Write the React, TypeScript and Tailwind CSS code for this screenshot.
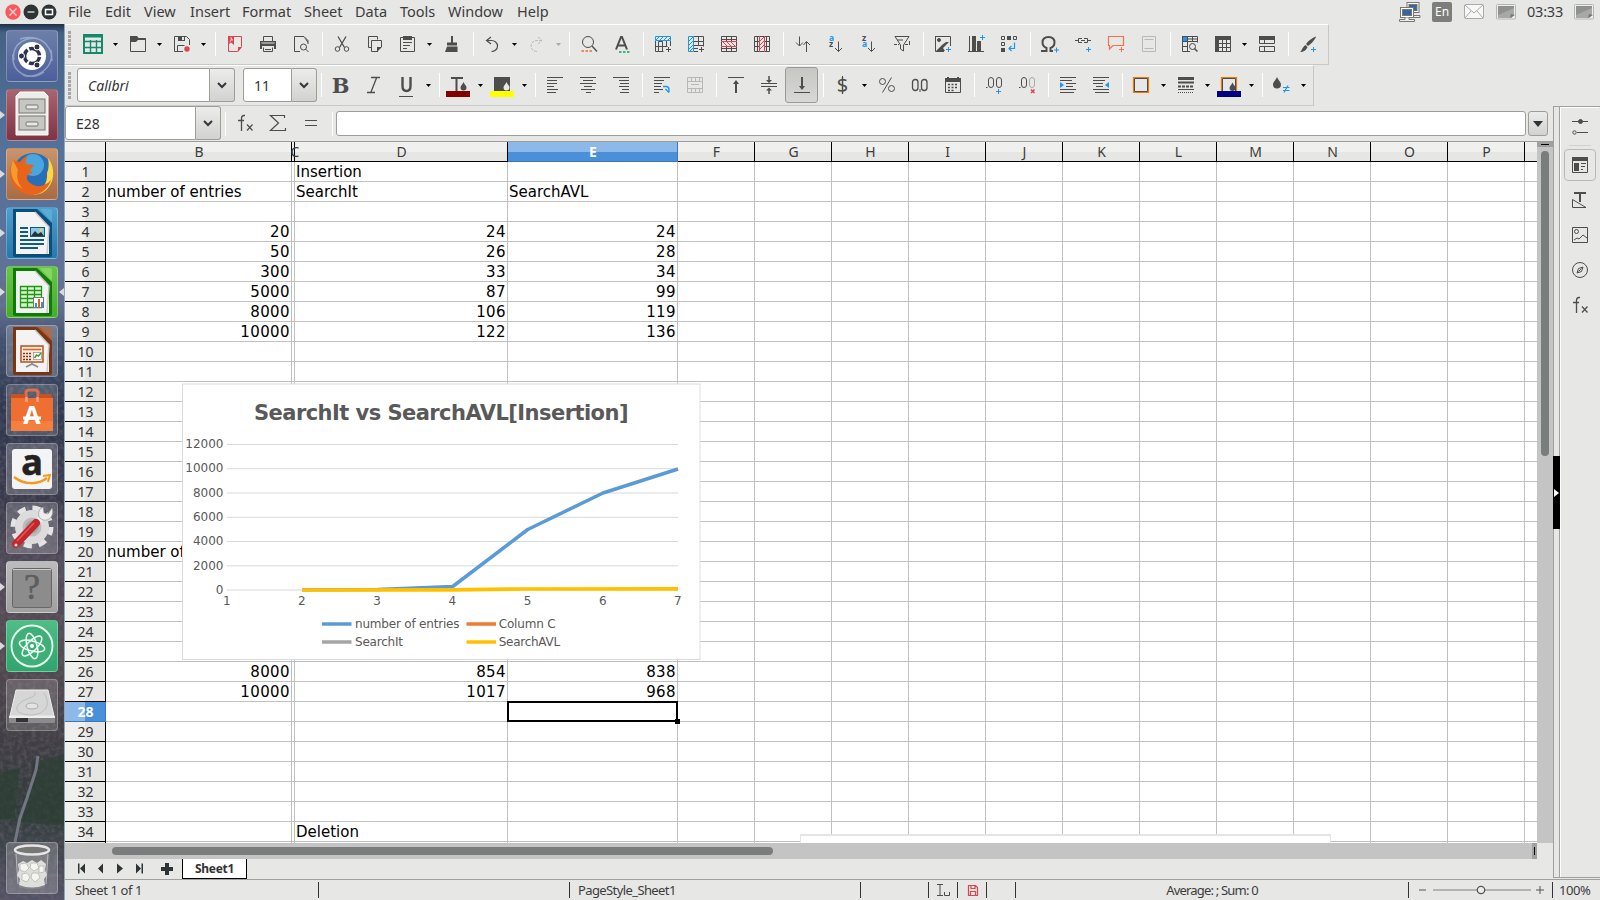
import type { ReactNode } from "react";

const G = "#4d4d4d";
const BLUE = "#1e96f0";
const RED = "#da4453";

function Svg({ children, w = 16, h = 16, className = "" }: { children: ReactNode; w?: number; h?: number; className?: string }) {
  return (
    <svg width={w} height={h} viewBox={`0 0 ${w} ${h}`} fill="none" stroke={G} className={`shrink-0 overflow-visible ${className}`}>
      {children}
    </svg>
  );
}

const plus = (x: number, y: number, c = BLUE) => <path d={`M${x - 2.5} ${y + 0}h5M${x} ${y - 2.5}v5`} stroke={c} />;
const drop = (x: number, y: number, c: string) => (
  <path d={`M${x} ${y}C${x + 1} ${y + 2.5} ${x + 3} ${y + 3.5} ${x + 3} ${y + 5.5}a3 3 0 0 1-6 0C${x - 3} ${y + 3.5} ${x - 1} ${y + 2.5} ${x} ${y}z`} fill={c} stroke="none" />
);

const icons: Record<string, ReactNode> = {
  new: (
    <g stroke="#15896b">
      <path d="M-2-1h18v18H-2z" strokeWidth="2" />
      <path d="M-3 .500h20" strokeWidth="2" /><path d="M-2 5.500h18M-2 11.500h18M4.500 4v14M10.500 4v14" strokeWidth="1.400" />
    </g>
  ),
  open: <><path d="M.5 15.5V.5h6l2 2h7v13z" /><path d="M0 0h7l2 2.500h7V4H8L6 6H0z" fill={G} stroke="none" /></>,
  save: <><path d="M9 15.500H.500V.500h12l3 3V9M3.500 15v-5.500h7" /><path d="M4 0h7v5H4zM8 1h2v3H8z" fill={G} fillRule="evenodd" stroke="none" /><circle cx="13" cy="13" r="2.700" fill={RED} stroke="none" /></>,
  pdf: <g><path d="M5 .500h9.500v10l-4 5H1.500V8" stroke={RED} /><path d="M15 11h-4v5zM1 0h6v9L4 6.500 1 9z" fill={RED} stroke="none" /><path d="M2.500 6c2-1 2-3 1.500-4.500.5 1 1 2.500 2 3" stroke="#fff" strokeWidth=".8" /></g>,
  print: <><path d="M3.500 5V.500h9V5M3.500 11.500v4h9v-4M5 13.500h6" /><path d="M0 5h16v8h-2v-3H2v3H0zm1.500 1.500v1h13v-1z" fill={G} fillRule="evenodd" stroke="none" /></>,
  preview: <><path d="M7 15.500H1.500V.500H11l4 4V8" /><path d="M10 0l5 5v2z" fill={G} stroke="none" /><circle cx="10.500" cy="11" r="3" /><path d="M12.500 13l3 3" /></>,
  cut: <><path d="M4 .500l6.500 11M12 .500L5.500 11.500" strokeWidth="1.300" /><circle cx="3.500" cy="13" r="2.300" /><circle cx="12.500" cy="13" r="2.300" /></>,
  copy: <><path d="M4.500 11.500H1.500V.500h9v3" /><path d="M14.500 11V4.500h-10v11H11" /><path d="M15 11l-5 5v-5z" fill={G} stroke="none" /></>,
  paste: <><path d="M.500 1.500h14v14H.500zM3 6.500h9M3 9.500h7M3 12.500h4" /><path d="M3 0h9v4H3z" fill={G} stroke="none" /></>,
  clone: <path d="M7 0h2v6.500h4v3H3v-3h4zM3 10.500h10.500V16H1z" fill={G} stroke="none" />,
  undo: <path d="M6 1L1.500 4.500 6 8M1.500 4.500h5c3 0 6 2 6 5.500s-3 5.500-6 5.500" strokeWidth="1.200" />,
  redo: <path d="M9 1l4 3.500L9 8M13 4.500H8C5 4.500 2 6.500 2 10s3 5.500 6 5.500" stroke="#bbb" strokeDasharray="3 1" />,
  find: <><circle cx="7" cy="6" r="5.500" /><path d="M11 10l5 5.500" strokeWidth="1.300" /><path d="M.500 15h11" stroke="#f0856a" strokeWidth="2" strokeDasharray="2.500 1.500" /></>,
  spell: <><path d="M2 13.500L7 1h1l5 12.500M4 9.500h7" strokeWidth="2" /><path d="M5 16h11" stroke="#3cb878" strokeWidth="2" strokeDasharray="2.500 1.500" /></>,
  insRow: <><path d="M.500 5v10.500h3V5.500h4v10M.500 10.500h12M11.500 5v5M15.500 5v5M3.500 15.500h5" /><path d="M.500.500h15v4H.500zM1 4l4-4M5 4l4-4M9 4l4-4M13 4l2-2" stroke={BLUE} />{plus(13.500, 13.500, G)}</>,
  insCol: <><path d="M6 .500h9.500v10M6 5.500h9M6 9.500h9M10.500.500v9M6 12.500h4M6 15.500h4" /><path d="M.500.500h5v15h-5zM1 5l4-4M1 9l4-4M1 13l4-4M2 15l3-3" stroke={BLUE} />{plus(13.500, 13.500, G)}</>,
  delRow: <><path d="M.500.500h15v15H.500zM5.500 0v5M10.500 0v5M5.500 11v5M10.500 11v5M0 3.500h16M0 12.500h16" /><path d="M0 5.500h16M0 10.500h16M2 6l4 4M6 6l4 4M10 6l4 4" stroke={RED} /></>,
  delCol: <><path d="M.500.500h15v15H.500zM0 5.500h5M0 10.500h5M11 5.500h5M11 10.500h5M3.500 0v16M12.500 0v16" /><path d="M5.500 0v16M10.500 0v16M6 5l4-4M6 9l4-4M6 13l4-4" stroke={RED} /></>,
  sort: <path d="M4.500.500v9M1 6.500l3.500 3.500L8 6.500M11.500 5.500V16M8.500 9l3-3.500 3.500 3.500" />,
  az: <><text x="1" y="5" fontSize="8.500" fontWeight="700" fill={BLUE} stroke="none">a</text><text x="1" y="11" fontSize="8.500" fontWeight="700" fill={G} stroke="none">z</text><path d="M10.500 5.500v10M7 12l3.500 3.500L14 12" /></>,
  za: <><text x="1" y="5" fontSize="8.500" fontWeight="700" fill={G} stroke="none">z</text><text x="1" y="11" fontSize="8.500" fontWeight="700" fill={BLUE} stroke="none">a</text><path d="M10.500 5.500v10M7 12l3.500 3.500L14 12" /></>,
  filter: <><path d="M1 .500h14L9.500 9v6L6.500 13V9zM3 4h6" /><path d="M0 8.500h5M11 8.500h5" strokeDasharray="3 1" /><path d="M15.500 5v4" /></>,
  image: <><path d="M.500.500h15V10M9 15.500H.500V0" /><circle cx="4" cy="4" r="1.500" fill={G} /><path d="M1 15l6-6 4-3h3l-6 6 2 3z" fill={G} stroke="none" />{plus(13.500, 13.500)}</>,
  chart: <><path d="M0 15.500h16M1.500 0v16" /><path d="M4 0h4v15H4zM9 5h4v10H9z" fill={G} stroke="none" />{plus(14.500, 1.500)}</>,
  pivot: <><path d="M.500.500h3v3h-3zM12.500.500h3v3h-3zM.500 6.500h3v3h-3z" /><path d="M6 0h4v4H6zM0 12h4v4H0z" fill={G} stroke="none" /><path d="M13.500 6.500v6h-5M10.500 10L8 12.500l2.500 2.500" stroke={BLUE} strokeWidth="1.200" /></>,
  omega: <><path d="M-1 15h5.500v-3C1 10.500.500 8 .500 6.500.500 3 3 1 6.500 1s6 2 6 5.500c0 2-1 4.500-4 5.500v3H11" strokeWidth="2" />{plus(14.500, 14)}</>,
  link: <><path d="M0 4.500h3M6 4.500h4M13 4.500h3M7 2.500H3.500v4H7M9 2.500h3.500v4H9" />{plus(13.500, 13.500)}</>,
  comment: <><path d="M.500.500h15v9H5L1.500 13V9.500h-1z" stroke="#f4724c" strokeWidth="1.200" />{plus(13.500, 13.500, "#f4724c")}</>,
  header: <path d="M1.500.500h13v15h-13zM3.500 3.500h9M3.500 12.500h9" stroke="#b8b8b8" />,
  freeze: <><path d="M.500.500h15v6M.500 0v15.500H8M0 5.500h16M0 10.500h6M5.500 0v16M10.500 0v6M5.500 3h10" /><path d="M1 1h4v4H1z" fill={BLUE} stroke="none" /><circle cx="10.500" cy="10.500" r="3" /><path d="M12.500 12.500l3 3" strokeWidth="1.500" /></>,
  table: <path d="M0 0h16v16H0zM4 4v3h3V4zM8 4v3h3V4zM12 4v3h3V4zM4 8v3h3V8zM8 8v3h3V8zM12 8v3h3V8zM4 12v3h3v-3zM8 12v3h3v-3zM12 12v3h3v-3z" fill={G} fillRule="evenodd" stroke="none" />,
  split: <><path d="M.500.500h15v7H.500zM.500 10.500h15v5H.500zM5.500 4v4M5.500 10v6" /><path d="M0 0h16v4H0z" fill={G} stroke="none" /></>,
  draw: <><path d="M15.500.500C12 2 8 5 6 8l2 2c3-2 6-5 8-9z" fill={G} stroke="none" /><path d="M5.500 9l2 2c-1 3-4 5-7.500 5 2-1 1.500-4 5.500-7z" fill={G} stroke="none" />{plus(13.500, 13.500)}</>,
  bold: <text x="7.500" y="15.500" textAnchor="middle" fontFamily="DejaVu Serif" fontWeight="700" fontSize="21" fill={G} stroke="none">B</text>,
  italic: <path d="M5 .500h9M1 15.500h8M10.500 1L5 15" strokeWidth="1.300" />,
  underline: <><path d="M3.500 0v9c0 4 1.500 5 4 5s4-1 4-5V0" strokeWidth="2.400" /><path d="M0 19.500h14" /></>,
  fontColor: <><path d="M0 1h12M5.500 1v13" strokeWidth="2" />{drop(12.500, 5, G)}<path d="M-5 14h24v6H-5z" fill="#820000" stroke="none" /></>,
  fill: <><path d="M-1 0h16v14H-1z" fill={G} stroke="none" />{drop(11.500, 5, "#e7e7e5")}<path d="M-5 14h24v6H-5z" fill="#ffff00" stroke="none" /></>,
  left: <path d="M0 .500h16M0 3.500h10M0 6.500h10M0 9.500h7M0 12.500h11M0 15.500h9" strokeWidth="1.100" />,
  center: <path d="M0 .500h16M3 3.500h10M0 6.500h16M4 9.500h8M1 12.500h14M6 15.500h5" strokeWidth="1.100" />,
  right: <path d="M0 .500h16M6 3.500h10M7 6.500h9M6 9.500h10M9 12.500h7M7 15.500h9" strokeWidth="1.100" />,
  wrap: <><path d="M0 .500h16M0 3.500h10M0 6.500h8M0 9.500h7M0 12.500h9M0 15.500h5" strokeWidth="1.100" /><path d="M9 9.500h3c2 0 3 1 3 3v3M11.500 12l3.500 3.500" stroke={BLUE} strokeWidth="1.300" /></>,
  merge: <path d="M.500.500h15v15H.500zM0 4.500h16M0 11.500h16M4.500 0v4M8.500 0v4M12.500 0v4M4.500 12v4M8.500 12v4M12.500 12v4M4 7.500h8" stroke="#b8b8b8" />,
  top: <><path d="M0 .500h16" /><path d="M8 16V4" strokeWidth="2" /><path d="M8 3l3 4H5z" fill={G} stroke="none" /></>,
  middle: <><path d="M0 6.500h16M0 9.500h16" /><path d="M8-1v5M8 17v-5" strokeWidth="1.500" /><path d="M8 6l3-3H5zM8 10.500l3 3H5z" fill={G} stroke="none" /></>,
  bottom: <><path d="M0 15.500h16" /><path d="M8 0v10" strokeWidth="2" /><path d="M8 13l3-4H5z" fill={G} stroke="none" /></>,
  dollar: <><text x="7.500" y="15" textAnchor="middle" fontSize="20" fill={G} stroke="none">$</text><path d="M7.500-1v18" /></>,
  percent: <><circle cx="3.500" cy="4.500" r="3" /><circle cx="12.500" cy="11.500" r="3" /><path d="M12.500.500L3.500 15.500" /></>,
  number: <><rect x=".500" y="2.500" width="5.500" height="11" rx="2.700" strokeWidth="1.300" /><rect x="9.500" y="2.500" width="5.500" height="11" rx="2.700" strokeWidth="1.300" /><path d="M8 12v3" /></>,
  date: <><path d="M.500 2.500h15v13H.500z" /><path d="M0 1h2V0h2v1h8V0h2v1h2v4H0z" fill={G} stroke="none" /><path d="M3 7.500h10M3 10.500h10M3 13.500h7" strokeWidth="1.500" strokeDasharray="2 1.500" /></>,
  addDec: <><rect x="2.500" y=".500" width="5" height="10" rx="2.500" /><rect x="10.500" y=".500" width="5" height="10" rx="2.500" /><path d="M0 10.500h1.500" />{plus(12.500, 14.500)}</>,
  delDec: <><rect x="2.500" y=".500" width="5" height="10" rx="2.500" /><rect x="10.500" y=".500" width="5" height="10" rx="2.500" stroke="#aaa" /><path d="M0 10.500h1.500" /><path d="M12 12.500l3.500 3.500M15.500 12.500L12 16" stroke={RED} strokeWidth="1.500" /></>,
  indent: <><path d="M0 .500h16M0 3.500h12M6 6.500h10M6 9.500h7M0 12.500h16M0 15.500h14" /><path d="M0 5l4 3-4 3z" fill={BLUE} stroke="none" /></>,
  outdent: <><path d="M0 .500h16M0 3.500h12M0 6.500h10M3 9.500h7M0 12.500h16M2 15.500h14" /><path d="M16 5l-4 3 4 3z" fill={BLUE} stroke="none" /></>,
  border: <><path d="M-.500.500h15v15h-15z" stroke="#f67400" strokeWidth="1.200" /><path d="M.500 1.500h13v13H.500z" /></>,
  lines: <><path d="M0 1.500h16" strokeWidth="3" /><path d="M0 5.500h16" strokeWidth="2" /><path d="M0 9.500h16" strokeWidth="2" strokeDasharray="3 1" /><path d="M0 12.500h16" /><path d="M0 15.500h16" strokeDasharray="1 1" /></>,
  borderColor: <><path d="M-.500 14V.500h15V14" stroke="#f67400" strokeWidth="1.200" /><path d="M.500 14V1.500h13V14" />{drop(10.500, 5.500, G)}<path d="M-5 14h24v6H-5z" fill="#000080" stroke="none" /></>,
  cond: <><path d="M3 0c1 3 4 5 4 7.500a4 4 0 0 1-8 0C-1 5 2 3 3 0z" fill={G} stroke="none" /><path d="M9 10.500h6.500M9 13.500h6.500M14 8.500l-4 7" stroke={BLUE} strokeWidth="1.200" /></>,
};

function Icon({ n, active = false }: { n: string; active?: boolean }) {
  return (
    <div className={`flex h-[36px] w-[33px] shrink-0 items-center rounded-[3px] ${active ? "border border-[#9a9a98] bg-linear-to-b from-[#c6c6c3] to-[#d8d8d6] pl-[8px]" : "pl-[9px]"}`}>
      <Svg>{icons[n]}</Svg>
    </div>
  );
}
function Arrow({ pale = false }: { pale?: boolean }) {
  return (
    <div className="flex w-[11px] shrink-0 items-center justify-center">
      <svg width="5" height="3" viewBox="0 0 5 3"><path d="M0 0h5L2.500 3z" fill={pale ? "#aaa" : "#000"} /></svg>
    </div>
  );
}
const Sep = () => <div className="ml-[5px] mr-[2px] h-6 w-px shrink-0 self-center bg-white" />;

function Tools({ spec }: { spec: string }) {
  return (
    <>
      {spec.split(" ").map((t, i) =>
        t === "|" ? <Sep key={i} /> : t === "v" ? <Arrow key={i} /> : t === "u" ? <Arrow key={i} pale /> : <Icon key={i} n={t} active={t === "bottom"} />
      )}
    </>
  );
}

const Handle = () => (
  <div className="flex w-[3px] shrink-0 flex-col gap-px self-center">
    {Array.from({ length: 7 }, (_, i) => <div key={i} className="h-[3px] w-[3px] bg-[#a5a5a3]" />)}
  </div>
);

function Combo({ text, box, className = "" }: { text: string; box: string; className?: string }) {
  return (
    <div className="flex h-[34px] shrink-0 text-[14px] text-[#333]">
      <div className={`flex items-center rounded-l-[3px] border border-[#9d9d99] bg-white ${box} ${className}`}>{text}</div>
      <div className="flex w-[25px] items-center justify-center rounded-r-[3px] border border-l-0 border-[#9d9d99] bg-linear-to-b from-[#ececea] to-[#d2d2d0]">
        <svg width="10" height="7" viewBox="0 0 10 7" fill="none"><path d="M1 1l4 4 4-4" stroke="#30363a" strokeWidth="2" /></svg>
      </div>
    </div>
  );
}

/* ---------- Launcher ---------- */

function DocTile({ dark, light, children }: { dark: string; light: string; children: ReactNode }) {
  return (
    <>
      <path d="M7 2h27l12 13v33q0 2-2 2H9q-2 0-2-2z" fill={dark} />
      <path d="M31 2h13q2 0 2 2v12z" fill={light} opacity=".75" />
      <path d="M10 5h19l14 15v27H10z" fill="#f3f3f3" />
      <path d="M29 5l14 15-2 27" stroke="#c9c9c9" strokeWidth="1.500" />
      {children}
    </>
  );
}

const tiles: { bg: string; art: ReactNode; left?: boolean; right?: boolean }[] = [
  {
    bg: "bg-linear-to-b from-[#6d7fa8] to-[#4d5f9a]",
    art: (
      <>
        <g stroke="#c8d2ea" strokeWidth="1.500" opacity=".5"><path d="M8 30C4 10 30 2 40 14M45 20c4 20-18 30-28 25M14 9c18-5 32 4 32 22" /><path d="M38 42C25 52 5 44 7 24" /></g>
        <circle cx="26" cy="26" r="14" fill="#fff" />
        <circle cx="26" cy="26" r="7.500" stroke="#2c3250" strokeWidth="3.500" strokeDasharray="13.700 2" strokeDashoffset="-1" />
        <g fill="#2c3250" stroke="#fff" strokeWidth="1"><circle cx="15.500" cy="26" r="3" /><circle cx="31" cy="17" r="3" /><circle cx="31" cy="35" r="3" /></g>
      </>
    ),
  },
  {
    bg: "bg-linear-to-b from-[#a96572] to-[#7e3443]", left: true,
    art: (
      <>
        <path d="M10 7l4-4h24l4 4v39H10z" fill="#ececea" stroke="#fff" />
        <rect x="13" y="10" width="26" height="14" fill="#c6c7c1" stroke="#777" /><rect x="13" y="27" width="26" height="14" fill="#c6c7c1" stroke="#777" />
        <rect x="20" y="16" width="12" height="4" rx="1" fill="#e8e8e4" stroke="#777" /><rect x="20" y="33" width="12" height="4" rx="1" fill="#e8e8e4" stroke="#777" />
      </>
    ),
  },
  {
    bg: "bg-linear-to-b from-[#c9946c] to-[#a96b43]", left: true,
    art: (
      <>
        <circle cx="27" cy="25" r="20" fill="#2a6eb5" /><circle cx="27" cy="17" r="11" fill="#4ba6de" />
        <path d="M42 10c7 9 7 22 0 30-4 5-10 7-16 7 10-3 16-12 15-22 2-5 2-9 1-15z" fill="#fbd84a" />
        <path d="M7 12c-6 11-3 26 8 32 12 7 26 1 30-12-6 7-15 8-21 3-4-3-4-7-1-9l4-1-3-3c2-1 2-3 4-5-4-1-5 0-8-1-1-4 1-6 2-8-4 1-6 3-8 6l-4-1z" fill="#e8641b" />
        <path d="M7 12c-5 12 0 24 10 29-5-5-7-12-5-19z" fill="#f59a2d" />
      </>
    ),
  },
  {
    bg: "bg-linear-to-b from-[#4fa0cc] to-[#2678a8]", left: true,
    art: (
      <DocTile dark="#0b4d7d" light="#5eb3dd">
        <path d="M14 21h8M14 25h8M14 29h8M14 33h24M14 37h24M14 41h18" stroke="#0f5a8c" strokeWidth="2" />
        <rect x="24.500" y="20.500" width="14" height="9" fill="#8cc7ea" stroke="#0f5a8c" /><path d="M25 29l4-5 3 3 3-2 3 4z" fill="#26323a" />
        <circle cx="35" cy="23" r="1.500" fill="#f1d34b" />
      </DocTile>
    ),
  },
  {
    bg: "bg-linear-to-b from-[#6ac44c] to-[#43ad2b]", left: true, right: true,
    art: (
      <DocTile dark="#0f7a05" light="#8fdd6c">
        <path d="M14 20h22v21H14z" fill="#dff3d7" /><path d="M14.500 20.500h21v21h-21zM14 24.500h22M14 28.500h22M14 32.500h22M14 36.500h22M21.500 20v21M28.500 20v21" stroke="#1c9a0e" strokeWidth="1.300" />
        <rect x="27.500" y="31.500" width="10" height="10" fill="#fff" stroke="#777" /><path d="M29 37h2v4h-2z" fill="#3a8ed0" /><path d="M32 33h2v8h-2z" fill="#e0601b" /><path d="M35 36h2v5h-2z" fill="#3a8ed0" />
      </DocTile>
    ),
  },
  {
    bg: "bg-white/20",
    art: (
      <DocTile dark="#7d3410" light="#b8683c">
        <rect x="15" y="21" width="22" height="16" fill="#fbeadd" stroke="#b4521e" strokeWidth="1.500" />
        <path d="M17 24.500h18" stroke="#e0601b" strokeWidth="1.500" /><path d="M17 28.500h8M17 31.500h8M17 34.500h8" stroke="#7d3410" strokeWidth="1.700" strokeDasharray="2 1" />
        <rect x="27.500" y="27.500" width="8" height="7" fill="#fff" stroke="#999" strokeWidth=".8" /><path d="M28.500 33l2-3 2 1 2.500-3" stroke="#3f9f35" strokeWidth="1.500" /><path d="M26 37v2l-6 3M26 39l6 3" stroke="#888" strokeWidth="1.500" />
      </DocTile>
    ),
  },
  {
    bg: "bg-white/15",
    art: (
      <>
        <path d="M20 18V9q0-3 3-3h6q3 0 3 3v9" stroke="#e0704a" strokeWidth="3" /><path d="M5 10h14v5H5zM33 10h12l2 5H33z" fill="#c85220" /><path d="M5 14h42v33H5z" fill="#ee6f31" /><path d="M5 37h42v10H5z" fill="#f47f3f" /><path d="M20.500 13v5M31.500 13v5" stroke="#f0a080" strokeWidth="2.500" />
        <text x="26" y="40" textAnchor="middle" fontSize="25" fontWeight="700" fill="#fff">A</text><path d="M17 34h18" stroke="#fff" strokeWidth="3" />
      </>
    ),
  },
  {
    bg: "bg-white/20",
    art: (
      <>
        <rect x="6" y="6" width="40" height="40" rx="3" fill="#f4f4f4" />
        <text x="26" y="32" textAnchor="middle" fontSize="36" fontWeight="700" fill="#222" stroke="#222" strokeWidth=".6">a</text>
        <path d="M8 34c10 8 24 8 33 1" stroke="#f79a1c" strokeWidth="2.500" /><path d="M37 33l7-1-2 7" stroke="#f79a1c" strokeWidth="2" />
      </>
    ),
  },
  {
    bg: "bg-white/20",
    art: (
      <>
        <circle cx="26" cy="25" r="19" stroke="#e4e4e4" strokeWidth="5" strokeDasharray="8 6.900" /><circle cx="26" cy="25" r="17" fill="#dcdcdc" /><circle cx="26" cy="25" r="8" fill="#a4a4a4" stroke="#bbb" strokeWidth="3" />
        <path d="M31 20l8-8" stroke="#eee" strokeWidth="6" /><path d="M46 6c3 9-5 15-11 11-4-3-3-10 2-12l1 6 4 1z" fill="#ececec" stroke="#999" strokeWidth=".7" />
        <path d="M10 42l20-21" stroke="#c3272e" strokeWidth="8" strokeLinecap="round" /><path d="M11 39l17-18" stroke="#e5575b" strokeWidth="1.500" /><circle cx="10" cy="43" r="1.500" fill="#eee" />
      </>
    ),
  },
  {
    bg: "bg-linear-to-b from-[#bcbcbc] to-[#a0a0a0]", left: true,
    art: (
      <>
        <rect x="6.500" y="7.500" width="39" height="39" rx="2" fill="#8c8c8c" stroke="#666" /><path d="M7 8.500h38" stroke="#ccc" />
        <text x="26" y="38" textAnchor="middle" fontSize="36" className="font-['Liberation_Serif']" fill="#5d5d5d" stroke="#5d5d5d" strokeWidth=".6">?</text>
      </>
    ),
  },
  {
    bg: "bg-linear-to-b from-[#4ebd86] to-[#2fa56d]", left: true,
    art: (
      <>
        <circle cx="26" cy="26" r="20.500" fill="#3fae78" stroke="#eafff4" strokeWidth="1.800" />
        <g stroke="#eafff4" strokeWidth="1.500"><ellipse cx="26" cy="26" rx="13" ry="5" transform="rotate(15 26 26)" /><ellipse cx="26" cy="26" rx="13" ry="5" transform="rotate(75 26 26)" /><ellipse cx="26" cy="26" rx="13" ry="5" transform="rotate(135 26 26)" /></g>
        <circle cx="26" cy="26" r="2" fill="#fff" />
      </>
    ),
  },
  {
    bg: "bg-white/15",
    art: (
      <>
        <path d="M10 11h32l6 26H4z" fill="#d6d6d6" stroke="#efefef" /><path d="M3 37h46v6q0 1-1 1H4q-1 0-1-1z" fill="#8b8b8b" /><path d="M3 37h46v2H3z" fill="#eee" /><path d="M10 39h12v4H10z" fill="#333" />
        <ellipse cx="26" cy="27" rx="6" ry="3" fill="#e4e4e4" stroke="#aaa" /><path d="M38 14c9 14-2 22-13 22S6 31 14 24s16-4 15-11" stroke="#bdbdbd" />
      </>
    ),
  },
];

function Tile({ bg, left, right, children }: { bg: string; left?: boolean; right?: boolean; children: ReactNode }) {
  return (
    <div className="flex w-full shrink-0 items-center">
      <div className="w-[6px]">{left && <svg width="5" height="8" viewBox="0 0 5 8"><path d="M0 0l5 4-5 4z" fill="#dadada" /></svg>}</div>
      <div className={`h-[52px] w-[52px] rounded-[4px] border border-white/25 ${bg}`}>
        <svg width="52" height="52" viewBox="0 0 52 52" fill="none" className="-m-px">{children}</svg>
      </div>
      <div className="w-[6px]">{right && <svg width="5" height="8" viewBox="0 0 5 8" className="ml-px"><path d="M5 0L0 4l5 4z" fill="#dadada" /></svg>}</div>
    </div>
  );
}

function Launcher() {
  return (
    <aside className="relative flex w-[65px] shrink-0 flex-col justify-between overflow-hidden border-r border-[#92a6bb] pt-[6px] pb-[6px]">
      <svg className="absolute inset-0" width="64" height="876" viewBox="0 0 64 876">
        <defs>
          <linearGradient id="sky" x1="0" y1="0" x2="0" y2="1">
            <stop offset="0" stopColor="#1e3048" /><stop offset=".01" stopColor="#456285" /><stop offset=".12" stopColor="#51719a" /><stop offset=".32" stopColor="#647297" />
            <stop offset=".36" stopColor="#3f5372" /><stop offset=".44" stopColor="#30384f" /><stop offset=".55" stopColor="#393a4b" />
            <stop offset=".62" stopColor="#514a5a" /><stop offset=".72" stopColor="#544a50" /><stop offset=".82" stopColor="#403e44" /><stop offset=".9" stopColor="#303c3a" /><stop offset="1" stopColor="#545266" />
          </linearGradient>
          <filter id="rock"><feTurbulence type="fractalNoise" baseFrequency=".22" numOctaves="3" seed="4" /><feColorMatrix values="0 0 0 0 .15  0 0 0 0 .13  0 0 0 0 .16  1.600 0 0 0 -.6" /></filter>
        </defs>
        <rect width="64" height="876" fill="url(#sky)" />
        <path d="M0 310l20 8 44 2v556H0z" filter="url(#rock)" opacity=".7" />
        <path d="M64 730l-30 8-12 60 42 4zM0 748l20-4-6 50-14 2z" fill="#2c3f34" opacity=".7" />
        <path d="M38 732l-2 14-9 28-7 20-5 24" stroke="#747683" strokeWidth="3" fill="none" />
      </svg>
      <div className="relative flex flex-col gap-[7px]">
        {tiles.map((t, i) => <Tile key={i} bg={t.bg} left={t.left} right={t.right}>{t.art}</Tile>)}
      </div>
      <div className="relative">
        <Tile bg="bg-white/20">
          <path d="M10 8l3 37q13 5 26 0l3-37z" fill="#8e8e90" opacity=".55" />
          <path d="M12 22l5-3 4 2 5-3 5 3 4-3 5 4-1 6 2 5-3 4 1 6q-13 5-26 0l1-6-3-4 2-5z" fill="#dededa" />
          <g fill="#f4f4f0" stroke="#b9b9b3" strokeWidth=".8"><path d="M14 22l6-1 3 5-4 4-5-2zM25 21l6 0 2 5-5 3-4-3zM33 24l5 0 0 6-5 1zM16 32l5-1 3 4-3 5-5-2zM26 31l6 0 2 5-5 4-4-4z" /></g>
          <ellipse cx="26" cy="8" rx="17" ry="4.500" fill="#777" stroke="#e6e6e6" strokeWidth="2.500" />
          <path d="M10 12l2 30M42 12l-2 30" stroke="#d8d8d8" opacity=".7" />
        </Tile>
      </div>
    </aside>
  );
}

/* ---------- Sheet ---------- */

const cols: [string, string][] = [
  ["B", "w-[186px]"], ["C", "w-[3px]"], ["D", "w-[213px]"], ["E", "w-[170px]"],
  ..."FGHIJKLMNOP".split("").map((c) => [c, "w-[77px]"] as [string, string]),
];
const data: Record<string, string> = {
  D1: "Insertion", B2: "number of entries", D2: "SearchIt", E2: "SearchAVL",
  B4: "20", D4: "24", E4: "24", B5: "50", D5: "26", E5: "28", B6: "300", D6: "33", E6: "34",
  B7: "5000", D7: "87", E7: "99", B8: "8000", D8: "106", E8: "119", B9: "10000", D9: "122", E9: "136",
  B20: "number of entries", B26: "8000", D26: "854", E26: "838", B27: "10000", D27: "1017", E27: "968", D34: "Deletion",
};

function Chart() {
  const ys = [444.5, 468.700, 493, 517.300, 541.500, 565.800, 590];
  return (
    <svg className="absolute left-[117px] top-[241px] font-['DejaVu_Sans']" width="519" height="277" viewBox="182 383 519 277" fill="#595959" fontSize="12">
      <rect x="182.500" y="384" width="517.500" height="275.500" fill="#fff" stroke="#dcdcdc" />
      <text x="254" y="420" fontSize="21" fontWeight="700" textLength="374.500">SearchIt vs SearchAVL[Insertion]</text>
      {ys.map((y, i) => (
        <g key={i}>
          <path d={`M227 ${y}H678`} stroke="#d9d9d9" />
          <text x="223.500" y={y + 3.700} textAnchor="end">{12000 - i * 2000}</text>
          <text x={226.700 + i * 75.200} y="605" textAnchor="middle">{i + 1}</text>
        </g>
      ))}
      <path d="M302.500 589.800L377.500 589.400 452.700 586.500 527.700 529.500 603 493 678 469" fill="none" stroke="#5b9bd5" strokeWidth="3.500" strokeLinejoin="round" />
      <path d="M302 590L452.700 589.800 527.700 589 678 588.800" fill="none" stroke="#ffc000" strokeWidth="3.700" />
      <g strokeWidth="3.500"><path d="M322 624h29.500" stroke="#5b9bd5" /><path d="M466.500 624H496" stroke="#ed7d31" /><path d="M322 642h29.500" stroke="#a5a5a5" /><path d="M466.500 642H496" stroke="#ffc000" /></g>
      <text x="355" y="628" textLength="104.500">number of entries</text><text x="498.700" y="628" textLength="57">Column C</text>
      <text x="355" y="646" textLength="48">SearchIt</text><text x="498.700" y="646" textLength="61.500">SearchAVL</text>
    </svg>
  );
}

function Sheet() {
  return (
    <div className="relative h-[701px] w-[1472px] overflow-hidden bg-white">
      <div className="flex h-5 text-[14px] leading-[19px] text-[#3c3c3c]">
        <div className="w-[41px] shrink-0 border-r border-b border-black bg-linear-to-b from-[#f0f0ee] from-50% to-[#e6e6e4] to-50%" />
        {cols.map(([c, w]) => (
          <div key={c} className={`flex shrink-0 justify-center border-r border-b ${w} ${c === "E" ? "border-[#3578c0] bg-linear-to-b from-[#8db8e7] from-50% to-[#4a90d9] to-50% font-bold text-white" : "border-black bg-linear-to-b from-[#f0f0ee] from-50% to-[#e6e6e4] to-50%"}`}>
            <span className={`relative h-[19px] ${c === "C" ? "left-[2px]" : "pl-px"}`}>{c}</span>
          </div>
        ))}
        <div className="grow border-b border-black bg-linear-to-b from-[#f0f0ee] from-50% to-[#e6e6e4] to-50%" />
      </div>
      {Array.from({ length: 35 }, (_, i) => i + 1).map((r) => (
        <div key={r} className="flex h-5">
          <div className={`flex w-[41px] shrink-0 items-center justify-center border-r border-b pl-px text-[14px] leading-[19px] ${r === 28 ? "border-[#3578c0] bg-linear-to-r from-[#8db8e7] from-50% to-[#4a90d9] to-50% font-bold text-white" : "border-black bg-linear-to-r from-[#f0f0ee] from-50% to-[#e6e6e4] to-50% text-[#333]"}`}>{r}</div>
          {cols.map(([c, w]) => {
            const v = data[c + r];
            return (
              <div key={c} className={`shrink-0 border-r border-b border-[#c0c0c0] pr-px font-['DejaVu_Sans'] text-[15px] leading-[21px] whitespace-nowrap text-black ${w} ${v && /^\d/.test(v) ? "text-right tracking-[0.4px]" : c === "C" ? "" : "pl-px"}`}>{v}</div>
            );
          })}
          <div className="grow border-b border-[#c0c0c0]" />
        </div>
      ))}
      <Chart />
      <div className="absolute left-[735px] top-[692px] h-5 w-[531px] border border-t-2 border-[#e4e4e4] bg-white" />
      <div className="absolute left-[442px] top-[559px] h-[21px] w-[171px] border-2 border-black" />
      <div className="absolute left-[610px] top-[577px] h-[5px] w-[5px] bg-black" />
    </div>
  );
}

const menu: [string, string][] = [
  ["File", "w-[37px]"], ["Edit", "w-[39px]"], ["View", "w-[46px]"], ["Insert", "w-[52px]"], ["Format", "w-[62px]"],
  ["Sheet", "w-[51px]"], ["Data", "w-[45px]"], ["Tools", "w-[48px]"], ["Window", "w-[69px]"], ["Help", "w-[40px]"],
];

const NoteIcon = () => (
  <svg width="20" height="16" viewBox="0 0 20 16"><rect x=".5" y=".5" width="19" height="14.500" rx="1" fill="#eee" stroke="#b5b5b3" /><path d="M2 2h16v9l-3 3H2z" fill="#8e918e" /><path d="M2 11L18 4v7l-3 3H2z" fill="#a6a9a5" /><path d="M14 14l1-4 4 1z" fill="#777" /></svg>
);
const SideIcon = ({ children, active = false }: { children: ReactNode; active?: boolean }) => (
  <div className={`mb-[3px] flex h-8 w-8 items-center justify-center rounded-[4px] ${active ? "border border-[#b9b9b7]" : ""}`}><Svg>{children}</Svg></div>
);
const VLine = () => <div className="h-4 w-px shrink-0 bg-[#333]" />;
const FxIcon = <><path d="M8 .500H7q-2.500 0-2.500 3V16M1 5.500h6" strokeWidth="1.300" /><path d="M10 9.500l5.500 6M15.500 9.500l-5.500 6" strokeWidth="1.200" /></>;

export default function App() {
  return (
    <div className="flex h-[900px] w-[1600px] flex-col overflow-hidden bg-[#e7e7e5] font-['Noto_Sans',sans-serif] text-[#3c3c3c]">
      <header className="flex h-6 shrink-0 items-center pl-[5px]">
        <svg width="52" height="16" viewBox="0 0 52 16" fill="none" className="shrink-0">
          <circle cx="8" cy="8" r="7.700" fill="#f9595b" /><circle cx="26" cy="8" r="7.500" fill="#2e3436" /><circle cx="44" cy="8" r="7.500" fill="#2e3436" />
          <path d="M4.500 4.500l7 7M11.500 4.500l-7 7" stroke="#f3dada" strokeWidth="1.300" /><path d="M22.500 8h7" stroke="#ccc" strokeWidth="1.500" /><path d="M40.500 5.500h7v5h-7z" stroke="#fff" strokeWidth="1.500" />
        </svg>
        <nav className="ml-[11px] flex pb-[2px] text-[14.5px] leading-[22px]">
          {menu.map(([m, w]) => <span key={m} className={w}>{m}</span>)}
        </nav>
        <div className="mr-[6px] ml-auto flex items-center">
          <svg width="22" height="22" viewBox="0 0 22 22" stroke="#77776f"><rect x="8" y="1.500" width="12" height="10" fill="#fff" /><rect x="10" y="3.500" width="8" height="6" fill="#3466a5" /><path d="M14 12.500v2h7v2H10" fill="#eee" /><rect x="1.500" y="6.500" width="13" height="10" fill="#fff" /><rect x="3.500" y="8.500" width="9" height="6" fill="#3466a5" /><path d="M6 16.500v2H.500v2h15v-2H10v-2" fill="#eee" /></svg>
          <div className="ml-[11px] flex h-5 w-5 items-center justify-center rounded-[2px] bg-[#7d7d7b] text-[12px] text-white">En</div>
          <svg width="20" height="15" viewBox="0 0 20 15" fill="#f8f8f8" stroke="#aaa" className="mb-px ml-3"><rect x=".5" y=".5" width="19" height="14" rx="1" /><path d="M1 1l9 8 9-8M1 14l6-7M19 14l-6-7" fill="none" /></svg>
          <div className="ml-3"><NoteIcon /></div>
          <span className="ml-[11px] w-[36px] pb-[2px] text-[14.5px] leading-[22px] tracking-[-0.2px]">03:33</span>
          <div className="ml-[11px]"><NoteIcon /></div>
        </div>
      </header>
      <div className="flex min-h-0 grow">
        <Launcher />
        <div className="flex min-w-0 grow flex-col">
          <div className="flex h-[41px] w-[1264px] shrink-0 items-center border-t border-r border-b border-t-white border-r-[#c8c8c6] border-b-[#c8c8c6] pb-px pl-[3px]">
            <Handle /><div className="w-[6px]" />
            <Tools spec="new v open v save v" />
            <div className="w-px" />
            <Tools spec="| pdf print preview | cut copy paste v clone | undo v redo u | find spell | insRow insCol delRow delCol | sort az za filter | image chart pivot | omega link comment header | freeze table v split | draw" />
          </div>
          <div className="flex h-[41px] w-[1249px] shrink-0 items-center border-t border-r border-b border-t-white border-r-[#c8c8c6] border-b-[#c8c8c6] pb-px pl-[3px]">
            <Handle /><div className="w-[6px] shrink-0" />
            <Combo text="Calibri" box="w-[133px]" className="pl-[10px] italic" />
            <div className="w-2 shrink-0" />
            <Combo text="11" box="w-[49px]" className="pl-[10px]" />
            <div className="-ml-px flex"><Tools spec="| bold italic underline v | fontColor v fill v | left center right | wrap merge | top middle bottom | dollar v percent number date | addDec delDec | indent outdent | border v lines v borderColor v | cond v" /></div>
          </div>
          <div className="flex min-h-0 grow">
            <div className="flex w-[1488px] shrink-0 flex-col">
              <div className="flex h-9 items-center border-b border-[#9d9d9b]">
                <div className="self-start"><Combo text="E28" box="w-[131px]" className="pl-[10px]" /></div>
                <div className="-ml-px"><Sep /></div>
                <div className="ml-[9px] flex h-[34px] items-center gap-[17px] self-start">
                  <Svg>{FxIcon}</Svg>
                  <Svg><path d="M14.500 3V.500h-14l8 7.500-8 7.500h15V13" strokeWidth="1.200" /></Svg>
                  <Svg><path d="M2 5.500h12M2 10.500h12" /></Svg>
                </div>
                <div className="ml-[13px] h-6 w-px bg-white" />
                <div className="ml-[3px] h-[25px] w-[1190px] rounded-[3px] border border-[#9d9d99] bg-white" />
                <div className="ml-[2px] flex h-[25px] w-5 items-center justify-center rounded-[3px] border border-[#9d9d99] bg-linear-to-b from-[#ececea] to-[#d2d2d0]"><svg width="10" height="6"><path d="M0 0h10L5 6z" fill="#2e3436" /></svg></div>
              </div>
              <div className="flex h-[701px]">
                <Sheet />
                <div className="flex w-4 flex-col items-center bg-[#c3c4c3]">
                  <div className="flex h-[5px] w-full items-center justify-center bg-[#a0a19f]"><div className="h-px w-2 bg-black" /></div>
                  <div className="mt-1 h-[305px] w-2 rounded-full bg-[#797d7c]" />
                </div>
              </div>
              <div className="flex h-4 w-[1472px] items-center bg-[#c3c4c3]">
                <div className="ml-[47px] h-2 w-[661px] rounded-full bg-[#797d7c]" />
                <div className="ml-auto flex h-4 w-[5px] items-center justify-center bg-[#a0a19f]"><div className="h-2 w-px bg-black" /></div>
              </div>
              <div className="flex h-5 items-start pl-[13px]">
                <svg width="96" height="19" viewBox="0 0 96 19" fill="#2e3436" className="shrink-0">
                  <path d="M0 4.500h1.500v10H0zM7 4.500v10l-5-5zM25 4.500v10l-5-5zM39 4.500v10l6-5zM58 4.500v10l5-5zM63.500 4.500H65v10h-1.500zM87 4h4v4h4v4h-4v4h-4v-4h-4V8h4z" />
                </svg>
                <div className="ml-[8px] flex h-[20px] w-[65px] items-center justify-center border-x border-b border-black bg-white pt-px text-[12px] font-bold tracking-[-0.3px] text-[#333]">Sheet1</div>
              </div>
            </div>
            <div className="flex h-[772px] w-[47px] border-t border-b border-l border-[#a0a09e]">
              <div className="flex w-[6px] shrink-0 flex-col border-r border-[#a0a09e]">
                <div className="-ml-px mt-[349px] flex h-[73px] w-[7px] items-center justify-center bg-black"><svg width="5" height="8"><path d="M0 0l5 4-5 4z" fill="#fff" /></svg></div>
              </div>
              <div className="flex w-[39px] flex-col items-center border-t border-l border-white pt-[3px]">
                <div className="flex h-8 items-center pb-px"><Svg><path d="M0 2.500h16M5 13.500h11" /><circle cx="8.500" cy="2.500" r="2" fill={G} /><circle cx="2.500" cy="13.500" r="1.700" /></Svg></div>
                <div className="mt-[2px] mb-[3px] h-px w-[22px] bg-[#d0d0ce]" />
                <SideIcon active><path d="M.500.500h15v15H.500zM9 6.500h5M9 9.500h4M9 12.500h2" /><path d="M0 0h16v4H0zM2 6h5v8H2z" fill={G} stroke="none" /></SideIcon>
                <SideIcon><path d="M2 1h12M8 1v9" strokeWidth="2" /><path d="M.500 7.500v8H14z" /></SideIcon>
                <SideIcon><path d="M.500.500h15v15H.500zM2 13l3-2 2 1 4-4 4 3" /><circle cx="4.500" cy="4.500" r="2" /></SideIcon>
                <SideIcon><circle cx="8" cy="8" r="7.500" /><path d="M11 5L9.500 9.500 5 11l1.500-4.500zM6.500 9.500l3-3" /></SideIcon>
                <SideIcon>{FxIcon}</SideIcon>
              </div>
            </div>
          </div>
          <footer className="flex h-[21px] shrink-0 items-center border-t border-[#a0a09e] pl-[10px] text-[13px] leading-[18px] tracking-[-0.4px] whitespace-nowrap">
            <span className="w-[243px]">Sheet 1 of 1</span><VLine />
            <div className="w-[250px]" /><VLine /><span className="w-[290px] pl-2 tracking-[-0.6px]">PageStyle_Sheet1</span><VLine />
            <div className="w-[67px]" /><VLine />
            <div className="flex w-[28px] justify-center pl-px"><Svg w={14} h={12}><path d="M0 .500h6M0 11.500h6M3 .500v11M7.500 8v3.500h5V8" /></Svg></div><VLine />
            <div className="flex w-[28px] justify-center pl-[2px]"><Svg w={10} h={11}><path d="M.500.500h7l2 2v8h-9zM3 .500v3h4v-3M2.500 10V6.500h5V10" stroke={RED} strokeWidth="1.200" /></Svg></div><VLine />
            <div className="w-[28px]" /><VLine />
            <span className="w-[392px] text-center tracking-[-0.8px]">Average: ; Sum: 0</span><VLine />
            <div className="flex w-[143px] pl-[10px]">
              <svg width="126" height="12" viewBox="0 0 126 12" stroke="#555" fill="none"><path d="M0 6h7M117 6h8M121 2v8" /><path d="M14 6h98" stroke="#a2a2a0" strokeWidth="1.500" /><circle cx="62" cy="6" r="3.700" fill="#eee" strokeWidth="1.300" /></svg>
            </div>
            <VLine /><span className="pl-[6px]">100%</span>
          </footer>
        </div>
      </div>
    </div>
  );
}
